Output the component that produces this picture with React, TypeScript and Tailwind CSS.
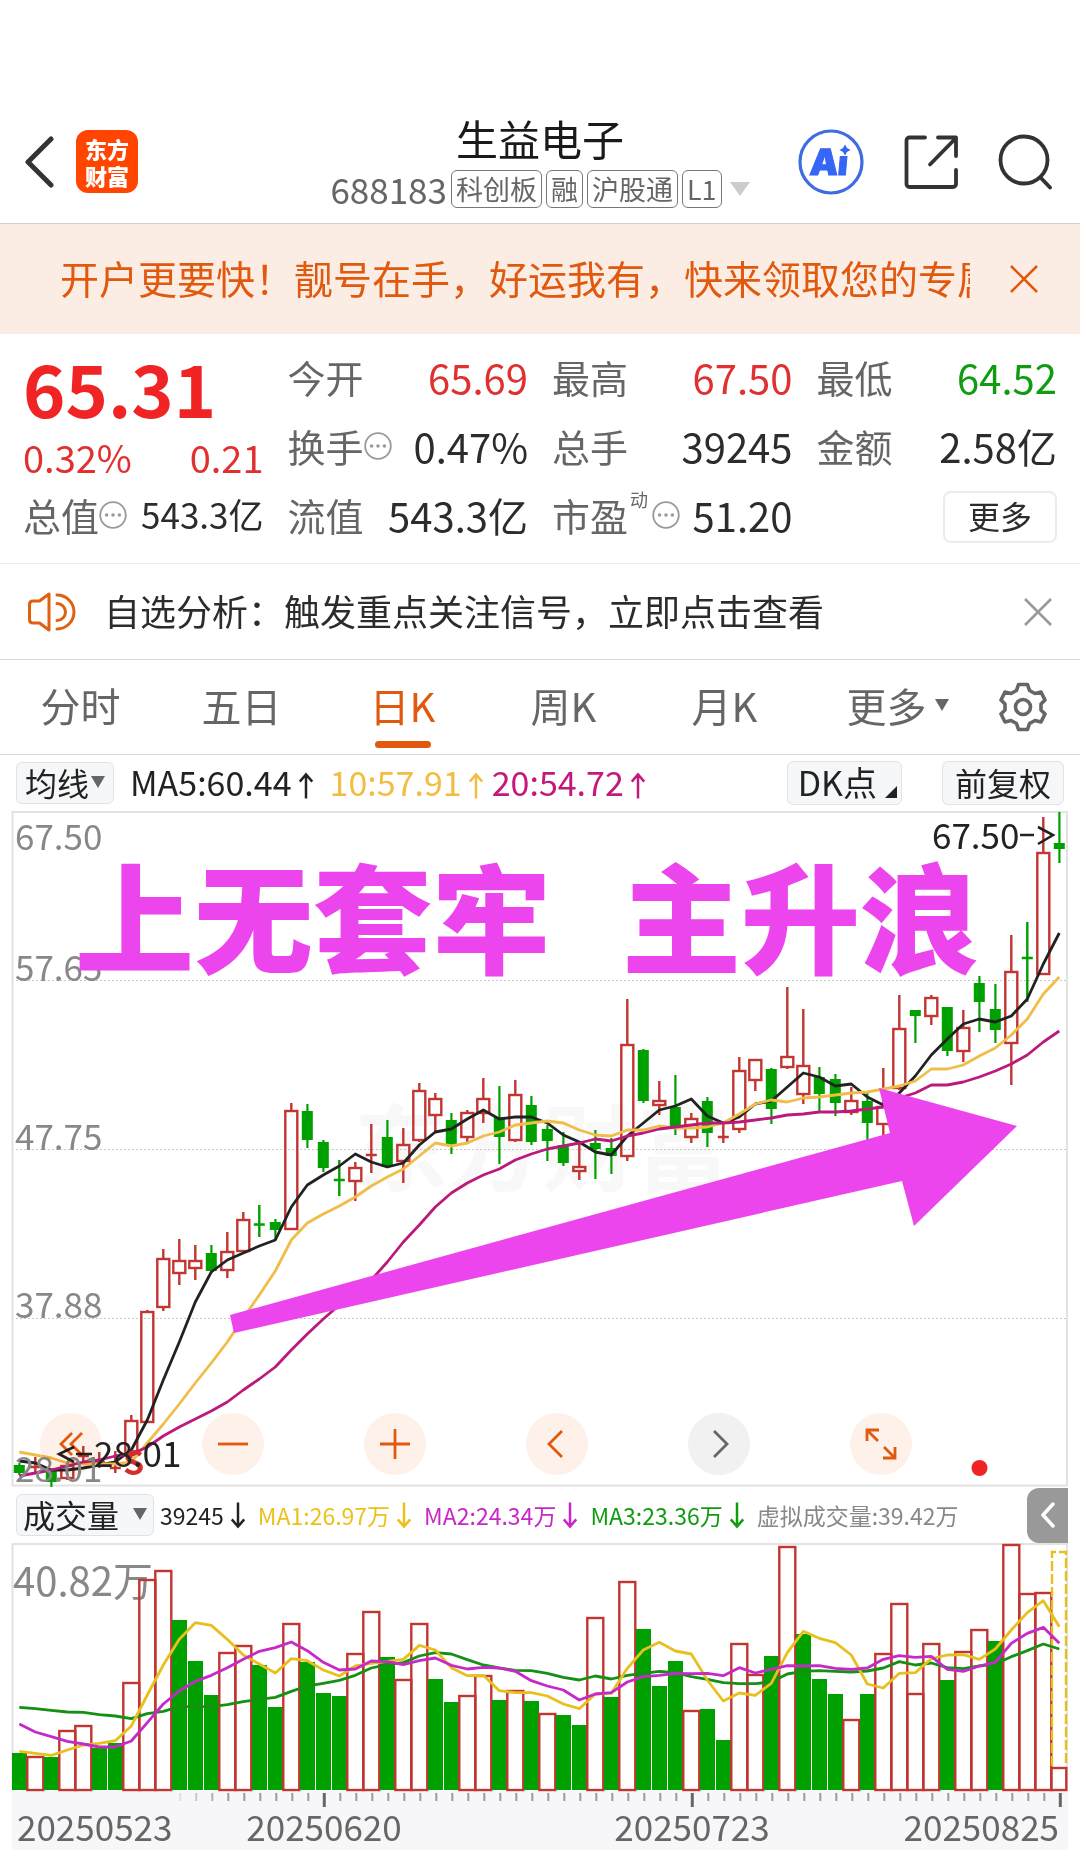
import React from "react";

const RED = "#c23531";
const GREEN = "#00a000";

// [rising, high, bodyTop, bodyBottom, low] in chart units
type Candle = [number, number, number, number, number];
const candles: Candle[] = [
  [0, 1463, 1465, 1473, 1475], [1, 1457, 1466, 1468, 1473], [0, 1469, 1471, 1482, 1487], [1, 1463, 1466, 1478, 1480],
  [1, 1446, 1455, 1457, 1465], [1, 1452, 1461, 1463, 1468], [1, 1451, 1467, 1469, 1473], [1, 1415, 1421, 1455, 1458],
  [1, 1310, 1312, 1422, 1423], [1, 1249, 1259, 1307, 1311], [1, 1239, 1261, 1273, 1285], [1, 1245, 1261, 1268, 1280],
  [0, 1245, 1253, 1271, 1272], [1, 1232, 1252, 1270, 1278], [1, 1212, 1220, 1251, 1253], [0, 1205, 1223, 1226, 1237],
  [0, 1219, 1222, 1230, 1240], [1, 1103, 1111, 1229, 1230], [0, 1104, 1111, 1140, 1148], [0, 1140, 1142, 1168, 1172],
  [0, 1160, 1179, 1181, 1196], [1, 1162, 1168, 1181, 1201], [1, 1124, 1154, 1156, 1173], [0, 1120, 1137, 1167, 1168],
  [1, 1128, 1145, 1161, 1183], [1, 1083, 1091, 1140, 1142], [1, 1093, 1099, 1115, 1132], [0, 1113, 1120, 1144, 1154],
  [1, 1110, 1113, 1137, 1144], [1, 1078, 1099, 1113, 1123], [0, 1086, 1117, 1137, 1164], [1, 1080, 1095, 1140, 1142],
  [0, 1096, 1105, 1142, 1145], [0, 1125, 1129, 1141, 1161], [0, 1132, 1145, 1163, 1166], [1, 1141, 1167, 1171, 1180],
  [0, 1130, 1143, 1149, 1179], [0, 1138, 1148, 1156, 1174], [1, 999, 1045, 1156, 1161], [0, 1049, 1050, 1101, 1103],
  [1, 1081, 1101, 1105, 1115], [0, 1075, 1107, 1127, 1135], [1, 1113, 1119, 1137, 1143], [0, 1097, 1101, 1133, 1147],
  [1, 1123, 1136, 1138, 1143], [1, 1057, 1071, 1129, 1133], [1, 1059, 1060, 1080, 1091], [0, 1068, 1069, 1109, 1124],
  [1, 987, 1057, 1067, 1069], [1, 1009, 1066, 1094, 1104], [0, 1067, 1077, 1094, 1112], [0, 1074, 1079, 1103, 1116],
  [1, 1087, 1101, 1112, 1115], [0, 1093, 1101, 1123, 1140], [1, 1068, 1107, 1124, 1137], [1, 995, 1029, 1088, 1090],
  [0, 1010, 1010, 1016, 1043], [1, 995, 998, 1016, 1025], [0, 1007, 1007, 1051, 1056], [1, 1010, 1028, 1051, 1062],
  [0, 976, 983, 1002, 1032], [0, 984, 1009, 1030, 1043], [1, 935, 972, 1043, 1085], [0, 922, 957, 959, 1002],
  [1, 817, 853, 974, 975], [0, 812, 843, 849, 863],
];

const ma5 = [1461, 1463, 1470, 1470, 1468, 1465, 1462, 1450, 1420, 1380, 1342, 1302, 1272, 1260, 1253, 1246, 1240, 1207, 1185, 1175, 1166, 1154, 1162, 1167, 1163, 1145, 1132, 1129, 1119, 1110, 1119, 1117, 1117, 1123, 1135, 1142, 1152, 1155, 1136, 1123, 1110, 1106, 1099, 1116, 1123, 1117, 1104, 1101, 1087, 1073, 1077, 1086, 1084, 1097, 1105, 1093, 1076, 1055, 1039, 1024, 1019, 1022, 1016, 999, 964, 933];
const ma10 = [1452, 1455, 1458, 1463, 1464, 1464, 1464, 1462, 1443, 1424, 1404, 1383, 1363, 1342, 1318, 1295, 1271, 1240, 1223, 1214, 1206, 1197, 1186, 1177, 1169, 1156, 1143, 1146, 1143, 1136, 1132, 1125, 1123, 1121, 1123, 1130, 1135, 1136, 1130, 1130, 1126, 1128, 1128, 1127, 1123, 1114, 1104, 1100, 1102, 1098, 1097, 1095, 1093, 1092, 1089, 1086, 1081, 1069, 1069, 1065, 1056, 1048, 1035, 1019, 994, 977];
const ma20 = [1476, 1473, 1470, 1466, 1462, 1460, 1456, 1454, 1447, 1436, 1427, 1419, 1411, 1402, 1390, 1379, 1367, 1350, 1334, 1319, 1305, 1293, 1280, 1262, 1242, 1225, 1207, 1193, 1183, 1175, 1169, 1160, 1154, 1149, 1146, 1143, 1139, 1141, 1136, 1133, 1129, 1127, 1125, 1123, 1123, 1122, 1120, 1118, 1115, 1114, 1112, 1112, 1111, 1109, 1107, 1098, 1093, 1085, 1085, 1082, 1077, 1071, 1064, 1055, 1042, 1031];

// top of each volume column; the rising flag comes from volumeRising
const volumeTops = [1753, 1756, 1757, 1730, 1725, 1748, 1743, 1682, 1579, 1570, 1620, 1661, 1695, 1652, 1645, 1665, 1707, 1623, 1662, 1693, 1696, 1653, 1611, 1657, 1679, 1623, 1679, 1702, 1695, 1675, 1700, 1690, 1701, 1713, 1715, 1725, 1617, 1697, 1581, 1629, 1686, 1661, 1710, 1709, 1740, 1643, 1674, 1656, 1546, 1634, 1679, 1694, 1719, 1694, 1653, 1603, 1693, 1643, 1680, 1651, 1629, 1641, 1544, 1593, 1592, 1767];
const volumeRising = "010110011100011001000110110011010100101000100110100010111101101111";

// volume averages, in thirds of a unit below the panel's top
const vma1 = [664, 670, 676, 660, 645, 640, 632, 588, 495, 405, 328, 278, 286, 328, 375, 402, 429, 386, 392, 420, 438, 408, 400, 394, 388, 346, 360, 413, 437, 436, 482, 488, 488, 498, 522, 536, 492, 490, 415, 360, 337, 363, 372, 450, 513, 489, 496, 460, 368, 304, 325, 338, 375, 462, 474, 430, 428, 386, 375, 374, 388, 357, 300, 248, 212, 290];
const vma2 = [582, 606, 620, 634, 642, 651, 651, 633, 578, 522, 483, 454, 436, 413, 388, 364, 353, 336, 362, 397, 420, 417, 393, 395, 404, 392, 384, 406, 417, 412, 414, 424, 452, 468, 480, 510, 492, 488, 456, 440, 436, 430, 431, 430, 437, 413, 429, 418, 407, 408, 407, 415, 418, 414, 388, 377, 382, 379, 418, 424, 408, 397, 340, 310, 292, 340];
const vma3 = [532, 536, 541, 546, 547, 554, 558, 566, 551, 544, 530, 530, 530, 524, 515, 508, 502, 484, 468, 460, 451, 436, 414, 404, 398, 378, 368, 372, 389, 405, 414, 421, 422, 430, 442, 450, 438, 447, 436, 430, 424, 428, 440, 448, 458, 461, 461, 456, 432, 424, 422, 424, 426, 423, 414, 395, 405, 399, 413, 416, 408, 402, 380, 362, 342, 357];

const cx = (i: number) => 19.3 + 16 * i;
const line = (ys: number[]) => ys.map((y, i) => `${cx(i)},${y}`).join(" ");
const volumeLine = (vs: number[]) => line(vs.map((v) => 1530 + v / 3));

function CloseIcon({ className }: { className: string }) {
  return (
    <svg viewBox="0 0 28 28" className={className} fill="none" stroke="currentColor" strokeWidth="2.6">
      <path d="M1 1 27 27M27 1 1 27" />
    </svg>
  );
}

function Ellipsis() {
  return (
    <svg viewBox="0 0 28 28" className="h-7 w-7 shrink-0" fill="none" stroke="#999" strokeWidth="1.8">
      <circle cx="14" cy="14" r="12.8" />
      <g fill="#999" stroke="none">
        <circle cx="7.6" cy="14" r="1.8" />
        <circle cx="14" cy="14" r="1.8" />
        <circle cx="20.4" cy="14" r="1.8" />
      </g>
    </svg>
  );
}

function Header() {
  return (
    <header className="grid grid-cols-[1fr_auto_1fr] items-center border-b border-[#cfd3d6] pt-[100px] h-[224px]">
      <div className="flex items-center gap-[22px] pl-6">
        <button aria-label="返回">
          <svg viewBox="0 0 30 52" className="h-[52px] w-[30px]" fill="none" stroke="#333" strokeWidth="5" strokeLinecap="round" strokeLinejoin="round">
            <path d="M27 3 4 26 27 49" />
          </svg>
        </button>
        <div className="flex h-[63px] w-[62px] flex-col items-center justify-center rounded-xl bg-[#ff4500] text-[22px] leading-[27px] font-black text-white">
          <span>东方</span>
          <span>财富</span>
        </div>
      </div>
      <div className="flex flex-col items-center pb-1">
        <h1 className="text-[42px] leading-[58px] text-[#1a1a1a]">生益电子</h1>
        <div className="flex items-center gap-1 text-[#666]">
          <span className="text-[35px] leading-[44px]">688183</span>
          {["科创板", "融", "沪股通", "L1"].map((t) => (
            <span key={t} className="rounded-md border border-[#777] px-1 text-[27px] leading-9">{t}</span>
          ))}
          <svg viewBox="0 0 20 14" className="ml-1 h-3.5 w-5" fill="#ccc"><path d="M0 0H20L10 14Z" /></svg>
        </div>
      </div>
      <div className="flex items-center justify-end gap-10 pr-7">
        <button aria-label="AI">
          <svg viewBox="0 0 66 66" className="h-[66px] w-[66px]">
            <circle cx="33" cy="33" r="31" fill="none" stroke="#3f6ce0" strokeWidth="3.2" />
            <g transform="skewX(-5)">
              <text x="15" y="46" fontSize="36" fontWeight="900" fill="#3566f5" stroke="#3566f5" strokeWidth="1" fontFamily="Inter, sans-serif">A</text>
              <text x="43" y="46" fontSize="34" fontWeight="900" fill="#3566f5" stroke="#3566f5" strokeWidth="1" fontFamily="Inter, sans-serif">ı</text>
            </g>
            <path d="M47 15.500 49 19 52.500 21 49 23 47 26.500 45 23 41.500 21 45 19Z" fill="#3566f5" />
          </svg>
        </button>
        <button aria-label="分享">
          <svg viewBox="0 0 54 54" className="h-[54px] w-[54px]" fill="none" stroke="#333" strokeWidth="3.800" strokeLinecap="round" strokeLinejoin="round">
            <path d="M21 2.500H5.500A3 3 0 0 0 2.500 5.500V49A3 3 0 0 0 5.500 52H49A3 3 0 0 0 52 49V35" />
            <path d="M34 2.500H52V21M51 4 26 29.500" />
          </svg>
        </button>
        <button aria-label="搜索">
          <svg viewBox="0 0 54 56" className="h-14 w-[54px]" fill="none" stroke="#333" strokeWidth="3.800" strokeLinecap="round">
            <circle cx="26" cy="26" r="23.500" />
            <path d="M42.500 43.500 52 53.500" />
          </svg>
        </button>
      </div>
    </header>
  );
}

function Stat({ label, value, tone = "text-[#2c2c2c]", extra }: { label: string; value: string; tone?: string; extra?: React.ReactNode }) {
  return (
    <div className="flex items-center justify-between pb-1 whitespace-nowrap">
      <span className="flex items-center text-[38px] text-[#666]">{label}{extra}</span>
      <span className={`text-[40px] ${tone}`}>{value}</span>
    </div>
  );
}

function Quote() {
  return (
    <section className="grid auto-rows-[69px] grid-cols-4 gap-x-6 border-b border-[#ececec] px-[23px] pt-2.5 pb-3">
      <div className="row-span-2 flex flex-col">
        <span className="text-[72px] leading-[86px] font-bold text-[#f02424]">65.31</span>
        <div className="flex justify-between text-[38px] leading-[54px] text-[#e03030]">
          <span>0.32%</span>
          <span>0.21</span>
        </div>
      </div>
      <Stat label="今开" value="65.69" tone="text-[#e03030]" />
      <Stat label="最高" value="67.50" tone="text-[#e03030]" />
      <Stat label="最低" value="64.52" tone="text-[#109c10]" />
      <Stat label="换手" value="0.47%" extra={<Ellipsis />} />
      <Stat label="总手" value="39245" />
      <Stat label="金额" value="2.58亿" />
      <div className="flex items-center justify-between pb-1 whitespace-nowrap">
        <span className="flex items-center text-[38px] text-[#666]">总值<Ellipsis /></span>
        <span className="text-[35px] text-[#2c2c2c]">543.3亿</span>
      </div>
      <Stat label="流值" value="543.3亿" />
      <Stat label="市盈" value="51.20" extra={<><sup className="-top-4 pr-1 pl-0.5 text-[18px]">动</sup><Ellipsis /></>} />
      <div className="flex items-center justify-end">
        <button className="h-[52px] w-[114px] rounded-lg border-2 border-[#ebebeb] pb-1 text-[32px] leading-[44px] text-[#2c2c2c]">更多</button>
      </div>
    </section>
  );
}

function Notice() {
  return (
    <div className="flex h-24 items-center border-b border-[#d6d6d6] pr-7 pl-7">
      <svg viewBox="0 0 48 40" className="mr-7 h-10 w-12 shrink-0" fill="none" stroke="#e0600f" strokeWidth="3" strokeLinejoin="round" strokeLinecap="round">
        <path d="M21 2V38L11.500 31H5Q1.500 31 1.500 27.500V12.500Q1.500 9 5 9H11.500Z" />
        <path d="M29 11.500A8.500 8.500 0 0 1 29 28.500M29 3A17 17 0 0 1 29 37" />
      </svg>
      <p className="flex-1 pb-1 text-[36px] text-[#2c2c2c]">自选分析：触发重点关注信号，立即点击查看</p>
      <button aria-label="关闭提示" className="text-[#999]"><CloseIcon className="h-7 w-7" /></button>
    </div>
  );
}

function Tabs() {
  return (
    <nav className="grid h-[95px] grid-cols-[repeat(6,minmax(0,1fr))_114px] border-b border-[#d6d6d6] text-[40px] text-[#666]">
      {["分时", "五日", "日K", "周K", "月K"].map((t) =>
        t === "日K" ? (
          <button key={t} aria-current="page" className="relative pb-1 text-[#e0590e]">
            {t}
            <span className="absolute inset-x-0 bottom-1.5 mx-auto h-[7px] w-14 rounded-full bg-[#e0590e]" />
          </button>
        ) : (
          <button key={t} className="pb-1">{t}</button>
        ),
      )}
      <button className="flex items-center justify-center gap-2 pb-1 pl-6">
        更多
        <svg viewBox="0 0 14 12" className="h-3 w-3.5" fill="#666"><path d="M0 0H14L7 12Z" /></svg>
      </button>
      <button aria-label="设置" className="flex items-center justify-center">
        <svg viewBox="0 0 48 50" className="h-[50px] w-12" fill="none" stroke="#666" strokeWidth="3.600" strokeLinejoin="round">
          <path d="M19.500 2.500H28.500L30.500 8.500 36 11.500 42 10 46 18 42 22V28L46 32 42 40 36 38.500 30.500 41.500 28.500 47.500H19.500L17.500 41.500 12 38.500 6 40 2 32 6 28V22L2 18 6 10 12 11.500 17.500 8.500Z" />
          <circle cx="24" cy="25" r="7.500" />
        </svg>
      </button>
    </nav>
  );
}

function MaBar() {
  return (
    <div className="flex h-14 items-center px-4 text-[34px] whitespace-nowrap text-[#222]">
      <button className="flex h-[42px] items-center gap-0.5 rounded-md border border-[#dfe2e6] bg-[#f6f7f9] px-2 pb-0.5 text-[32px] leading-none">
        均线
        <svg viewBox="0 0 14 12" className="h-3 w-3.5" fill="#666"><path d="M0 0H14L7 12Z" /></svg>
      </button>
      <span className="ml-4 pb-1">MA5:60.44<Arrow up /></span>
      <span className="ml-4 pb-1 text-[#f2bd42]">10:57.91<Arrow up /></span>
      <span className="ml-2 pb-1 text-[#c4187c]">20:54.72<Arrow up /></span>
      <button className="ml-auto flex h-[44px] items-center gap-2 rounded-md border border-[#dfe2e6] bg-[#f6f7f9] pr-1 pb-0.5 pl-2.5 leading-none">
        DK点
        <svg viewBox="0 0 12 12" className="mt-5 h-3 w-3" fill="#222"><path d="M12 0V12H0Z" /></svg>
      </button>
      <button className="ml-10 h-[44px] rounded-md border border-[#dfe2e6] bg-[#f6f7f9] px-3 pb-0.5 text-[32px] leading-none">前复权</button>
    </div>
  );
}

function Arrow({ up = false }: { up?: boolean }) {
  return (
    <svg viewBox="0 0 18 30" className="ml-1.5 inline h-7 w-4 align-[-4px]" fill="none" stroke="currentColor" strokeWidth="2.800">
      {up ? <path d="M9 29V2M2 10 9 2 16 10" /> : <path d="M9 1V28M2 20 9 28 16 20" />}
    </svg>
  );
}

function RoundButton({ label, muted = false, children }: { label: string; muted?: boolean; children: React.ReactNode }) {
  return (
    <div className="flex flex-1 justify-center">
      <button aria-label={label} className={muted ? "rounded-full bg-[#f1f1f1] text-[#666]" : "rounded-full bg-[#fef1ea] text-[#e0590e]"}>
        <svg viewBox="0 0 62 62" className="h-[62px] w-[62px]" fill="none" stroke="currentColor" strokeWidth="2.800">{children}</svg>
      </button>
    </div>
  );
}

function PriceChart() {
  return (
    <div className="relative">
      <svg viewBox="0 811 1080 676" className="block h-auto w-full" fontFamily="'Noto Sans CJK SC', sans-serif">
        <text x="354" y="1184" fontSize="94" fontWeight="700" fill="#f8f8f8">东方财富</text>
        <g stroke="#c8c8c8" strokeWidth="1.200" strokeDasharray="2 2">
          <path d="M12 980.500H1068M12 1149.500H1068M12 1318.500H1068" />
        </g>
        <rect x="12.500" y="812" width="1054.500" height="673.500" fill="none" stroke="#e2e2e2" strokeWidth="2" />
        <g fontSize="35" fill="#888">
          <text x="15" y="850">67.50</text>
          <text x="15" y="981">57.65</text>
          <text x="15" y="1150">47.75</text>
          <text x="15" y="1318">37.88</text>
        </g>
        {candles.map(([up, h, t, b, l], i) => {
          const x = cx(i);
          const c = up ? RED : GREEN;
          return b - t < 4 ? (
            <path key={i} d={`M${x} ${h}V${l}M${x - 5.5} ${(t + b) / 2}H${x + 5.5}`} stroke={c} strokeWidth="2.400" />
          ) : up ? (
            <g key={i} stroke={c} strokeWidth="2.400" fill="none">
              <path d={`M${x} ${h}V${t}M${x} ${b}V${l}`} />
              <rect x={x - 6} y={t} width="12" height={b - t} />
            </g>
          ) : (
            <g key={i} fill={c}>
              <rect x={x - 1} y={h} width="2.200" height={l - h} />
              <rect x={x - 5.5} y={t} width="11" height={b - t} />
            </g>
          );
        })}
        <g fill="none" strokeWidth="2.800" strokeLinejoin="round">
          <polyline points={line(ma5)} stroke="#222" />
          <polyline points={line(ma10)} stroke="#f0bd48" />
          <polyline points={line(ma20)} stroke="#bb1a7c" />
        </g>
        <text x="15" y="1482" fontSize="35" fill="#888">28.01</text>
        <text x="123" y="1475" fontSize="34" fontWeight="700" fill="#d2302c">S</text>
        <text x="94" y="1467" fontSize="35" fill="#222">28.01</text>
        <path d="M74 1447 59 1454 74 1462M76 1454H92" fill="none" stroke="#222" strokeWidth="2.600" />
        <text x="932" y="849" fontSize="35" fill="#222">67.50</text>
        <path d="M1020 835H1034M1038 827 1053 835 1038 844" fill="none" stroke="#222" strokeWidth="2.600" />
        <circle cx="979.500" cy="1468" r="8" fill="#f02424" />
        <g fill="#ed45ee" fontSize="119" fontWeight="900">
          <text x="75" y="965">上无套牢</text>
          <text x="622" y="965">主升浪</text>
        </g>
        <path d="M230 1315 890 1133 879 1088 1017 1126 914 1226 902 1181 234 1333Z" fill="#ed45ee" />
      </svg>
      <div className="absolute bottom-3 -left-2.5 flex w-[90%] mix-blend-multiply">
        <RoundButton label="最早"><path d="M32 20 21 31 32 42M42 20 31 31 42 42" /></RoundButton>
        <RoundButton label="缩小"><path d="M16 31H46" /></RoundButton>
        <RoundButton label="放大"><path d="M16 31H46M31 16V46" /></RoundButton>
        <RoundButton label="前移"><path d="M36 18 23 31 36 44" /></RoundButton>
        <RoundButton label="后移" muted><path d="M26 18 39 31 26 44" /></RoundButton>
        <RoundButton label="全屏"><path d="M17 28V17H29M17 17 28 28M45 34V45H33M45 45 34 34" /></RoundButton>
      </div>
    </div>
  );
}

function VolumeBar() {
  return (
    <div className="flex h-[56px] items-center pr-3 pl-4 text-[23px] whitespace-nowrap">
      <button className="flex h-[42px] w-[138px] items-center justify-between rounded-md border border-[#dfe2e6] bg-[#f6f7f9] px-1.5 pb-0.5 text-[32px] leading-none text-[#222]">
        成交量
        <svg viewBox="0 0 14 12" className="h-3 w-3.5" fill="#666"><path d="M0 0H14L7 12Z" /></svg>
      </button>
      <span className="ml-1.5 text-[#222]">39245<Arrow /></span>
      <span className="ml-3 text-[#edc01c]">MA1:26.97万<Arrow /></span>
      <span className="ml-3 text-[#c727c7]">MA2:24.34万<Arrow /></span>
      <span className="ml-3 text-[#109c10]">MA3:23.36万<Arrow /></span>
      <span className="ml-3 text-[#888]">虚拟成交量:39.42万</span>
      <button aria-label="展开侧栏" className="ml-auto flex h-[55px] w-[41px] items-center justify-center rounded-l-xl bg-[#999]">
        <svg viewBox="0 0 14 26" className="h-[26px] w-3.5" fill="none" stroke="#fff" strokeWidth="3.500" strokeLinecap="round" strokeLinejoin="round"><path d="M12 2 2 13 12 24" /></svg>
      </button>
    </div>
  );
}

function VolumeChart() {
  return (
    <svg viewBox="0 1543 1080 307" className="block h-auto w-full" fontFamily="'Noto Sans CJK SC', sans-serif">
      <rect x="12" y="1791" width="1056" height="59" fill="#f7f7f9" />
      <path d="M12.500 1791V1544H1067V1791" fill="none" stroke="#e2e2e2" strokeWidth="2" />
      <text x="13" y="1596" fontSize="40" fill="#888">40.82万</text>
      {volumeTops.map((t, i) =>
        volumeRising[i] === "1" ? (
          <rect key={i} x={cx(i) - 8} y={t + 1} width={i === 65 ? 15 : 16} height={1789 - t} fill="none" stroke={RED} strokeWidth="2.400" />
        ) : (
          <rect key={i} x={cx(i) - 7.3} y={t} width="15" height={1790 - t} fill={GREEN} />
        ),
      )}
      <path d="M1052 1766V1552H1066V1766" fill="none" stroke="#e8c01e" strokeWidth="2.400" strokeDasharray="10 3" />
      <g fill="none" strokeWidth="2.800" strokeLinejoin="round">
        <polyline points={volumeLine(vma3)} stroke="#159015" />
        <polyline points={volumeLine(vma1)} stroke="#e8c01e" />
        <polyline points={volumeLine(vma2)} stroke="#c52ac8" />
      </g>
      {candles.map((_, i) => {
        if (i < 10) return null;
        const major = i === 19 || i === 42 || i === 65;
        return <path key={i} d={`M${cx(i) + 1} 1793V${major ? 1807 : 1801}`} stroke={major ? "#666" : "#999"} strokeWidth={major ? 3 : 2} opacity={i < 13 ? (i - 9) * 0.25 : 1} />;
      })}
      <g fontSize="35" fill="#666">
        <text x="17" y="1841">20250523</text>
        <text x="324" y="1841" textAnchor="middle">20250620</text>
        <text x="692" y="1841" textAnchor="middle">20250723</text>
        <text x="1059" y="1841" textAnchor="end">20250825</text>
      </g>
    </svg>
  );
}

export default function App() {
  return (
    <main className="w-full overflow-x-hidden bg-white font-['Noto_Sans_CJK_SC',sans-serif]">
      <Header />
      <aside className="flex h-[110px] items-center bg-[#fcede4] pr-[42px] pl-[60px] text-[#e0590e]">
        <p className="mr-10 flex-1 overflow-hidden pb-1 text-[39px] whitespace-nowrap">开户更要快！靓号在手，好运我有，快来领取您的专属</p>
        <button aria-label="关闭广告"><CloseIcon className="h-7 w-7" /></button>
      </aside>
      <Quote />
      <Notice />
      <Tabs />
      <MaBar />
      <PriceChart />
      <VolumeBar />
      <VolumeChart />
    </main>
  );
}
